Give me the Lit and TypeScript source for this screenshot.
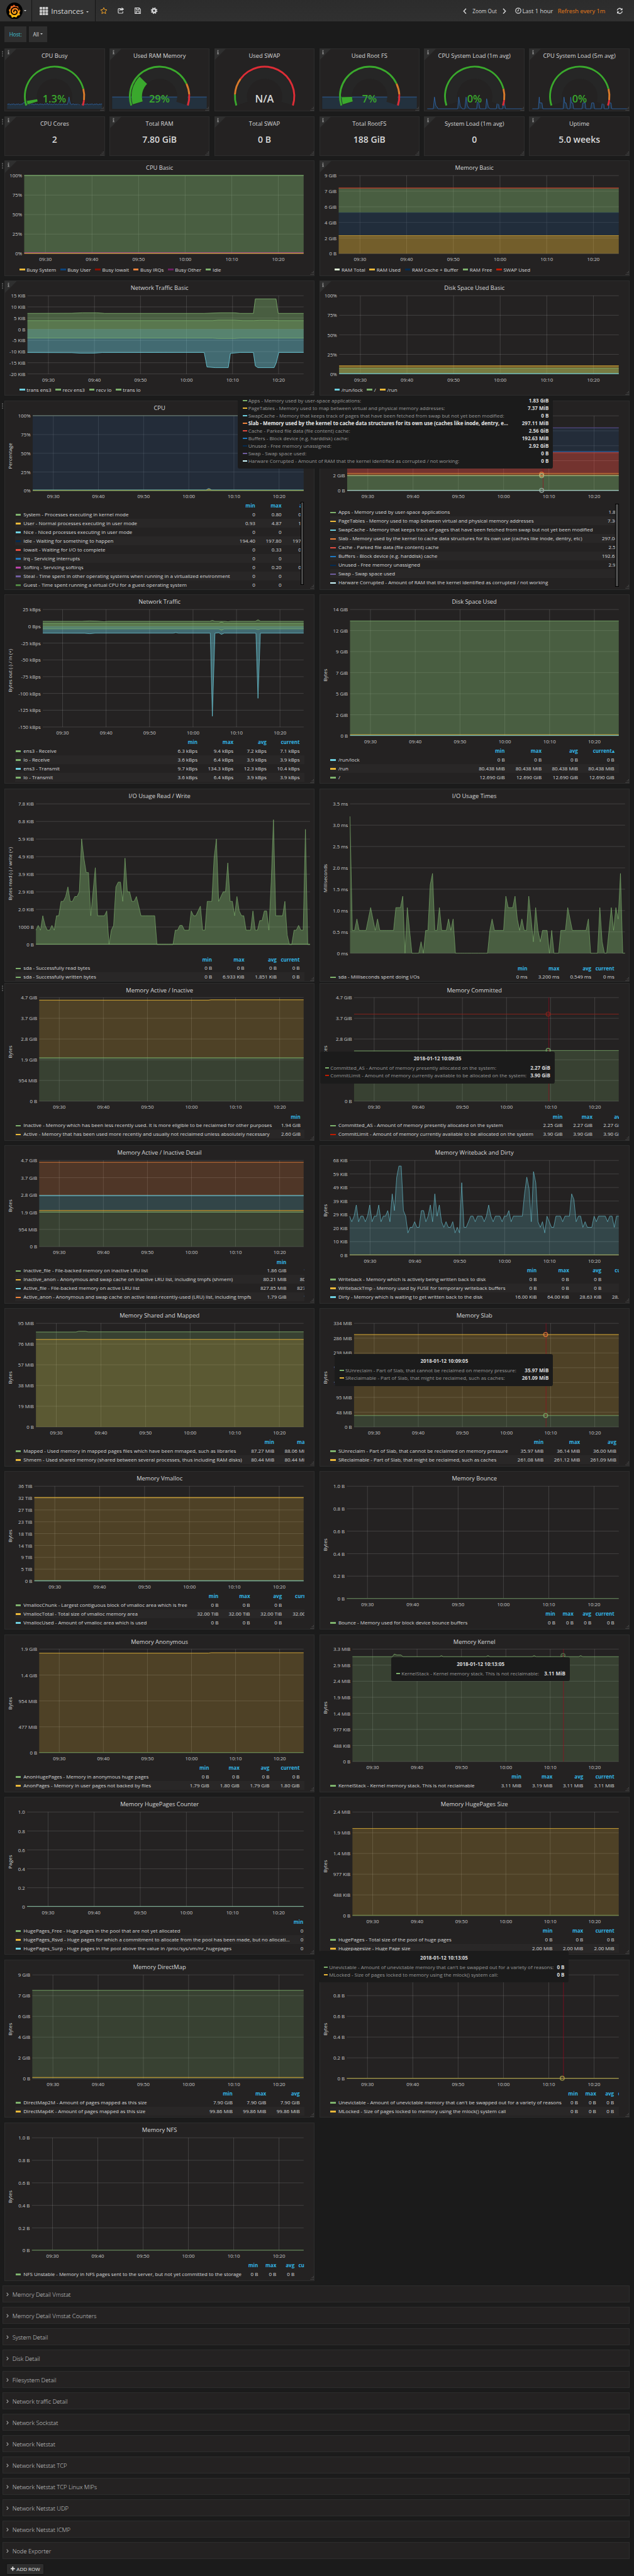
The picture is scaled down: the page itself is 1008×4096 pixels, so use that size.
import { LitElement, html, svg, css, nothing } from "lit";
import { customElement, property } from "lit/decorators.js";

type Pt = [number, number];
interface Layer { c: string; top: number | Pt[]; base?: number | Pt[]; fill?: number; w?: number; }
interface Legend { name: string; c: string; v?: string[]; }
interface Tip { x: number; y: number; w: number; h: number; title?: string; shift?: number; rows: [string, string, string, boolean?][]; }
interface Chart {
  title: string; x1: number; x2?: number; y2: number; labels: string[]; min?: number; max?: number;
  layers: Layer[]; axis?: string; axisY?: number; noTime?: boolean; info?: boolean;
  legend: Legend[]; inline?: boolean; heads?: string[]; cols?: number[]; headless?: boolean;
  scroll?: [number, number]; cursor?: number; dots?: [number, number, string][]; tip?: Tip;
}

const GREEN = "#7eb26d", YELLOW = "#eab839", CYAN = "#6ed0e0", ORANGE = "#ef843c", RED = "#e24d42",
  BLUE = "#1f78c1", NAVY = "#0a437c", DNAVY = "#052b51", PURPLE = "#705da0", MAGENTA = "#ba43a9", DRED = "#bf1b00";

/* Expands "3 4 6*2" into evenly spaced points over 0..1. */
const run = (s: string): Pt[] => {
  const v = s.trim().split(/\s+/).flatMap((t) => {
    const [a, n] = t.split("*");
    return Array(n ? +n : 1).fill(+a) as number[];
  });
  return v.map((y, i) => [i / (v.length - 1), y] as Pt);
};

const IO = run("3 4 3 6 4 3*2 4 3 6*2 9*2 10 12 9*2 10*2 11 22 18 15*2 6 11 16 6*4 7 0 3 4 12 13*2 9 18 11*2 9*2 10 8 6*7 0*8 3*2 4*2 3*3 7 6*2 7 8 3*2 9*3 18 22 9 10 11*2 17 9*2 6 10 7 6*2 3*3 7 3*2 5*2 7*2 3 13 26 6*4 9 2 0*2 3*2 4 3*2 24 0*2");
const MS = run("12 2*2 3 2*4 3 4 3 2 3 2*7 4*3 5 0 4 2 0*4 1 0 2*2 6 7 2*2 4 2*3 3 2 3 0*15 2 3 2*5 5 4*3 5 3 2 3 2*2 5 3 1 4 2 1 2*3 0 2 0*3 2*3 4 3 2*7 3 0*4 4 1 0*2 2 4 2 4 3 7 0*2");
const DIRTY = run("7 6 7 9 6 7*2 6 7 9 6 7*2 9 6 7*2 8 6 11 8 14 16*2 8 7 4 5*2 6 5*2 8*2 6 7 9 6 11 7 9 6 5 6 5*2 6 4 5 4 13 5*2 6 7*2 6 7*3 6 7 9 7 6 7*3 6 7*2 8 6 7*5 11 14 12 6 15 13 6 5 6 4 7 6 5*2 7*3 6 7*3 11 10 6 7*2 5 6 5*3 7 6 7*4 6 7*2 5 7*2");

const BYTES5 = ["4.7 GiB", "3.7 GiB", "2.8 GiB", "1.9 GiB", "954 MiB", "0 B"];
const UNIT = ["1.0 B", "0.8 B", "0.6 B", "0.4 B", "0.2 B", "0 B"];
const PCT = ["100%", "75%", "50%", "25%", "0%"];
const HEADS = ["min", "max", "avg", "current"];

const ROWS: { h: number; menu?: boolean; charts: Chart[] }[] = [
  { h: 286, menu: true, charts: [
    { title: "CPU Basic", info: true, x1: 47.2, y2: 221.3, labels: PCT, inline: true,
      layers: [
        { c: GREEN, top: 1.002, base: 0.012, fill: 0.42, w: 2 },
        { c: MAGENTA, top: 0.013, fill: 0.4, w: 1.2 },
        { c: YELLOW, top: 0.005, fill: 0.6, w: 1.5 }],
      legend: [{ name: "Busy System", c: YELLOW }, { name: "Busy User", c: NAVY }, { name: "Busy Iowait", c: "#890f02" }, { name: "Busy IRQs", c: ORANGE }, { name: "Busy Other", c: "#6d1f62" }, { name: "Idle", c: GREEN }] },
    { title: "Memory Basic", info: true, x1: 45.7, y2: 221.3, labels: ["9 GiB", "7 GiB", "6 GiB", "4 GiB", "2 GiB", "0 B"], inline: true,
      layers: [
        { c: GREEN, top: 0.839, base: 0.525, fill: 0.42, w: 0 },
        { c: "#b8402a", top: 0.84, w: 2.2 },
        { c: "#203c5c", top: 0.525, base: 0.23, fill: 0.45, w: 1 },
        { c: YELLOW, top: 0.23, fill: 0.4, w: 1.3 }],
      legend: [{ name: "RAM Total", c: "#e0f9d7" }, { name: "RAM Used", c: YELLOW }, { name: "RAM Cache + Buffer", c: DNAVY }, { name: "RAM Free", c: GREEN }, { name: "SWAP Used", c: DRED }] },
  ] },
  { h: 286, menu: true, charts: [
    { title: "Network Traffic Basic", info: true, x1: 54.9, y2: 221.7, labels: ["15 KiB", "10 KiB", "5 KiB", "0 B", "-5 KiB", "-10 KiB", "-15 KiB", "-20 KiB"], min: -20, max: 15, inline: true,
      layers: [
        { c: GREEN, top: [[0, 7.1], [0.16, 7.15], [0.2, 7.35], [0.25, 7.35], [0.28, 7.1], [0.64, 7.1], [0.7, 7.35], [0.75, 7.35], [0.77, 7.1], [0.818, 7.1], [0.825, 13.6], [0.9, 13.6], [0.908, 7.1], [1, 7.1]], base: 0, fill: 0.42, w: 1.4 },
        { c: GREEN, top: [[0, 3.85], [0.67, 3.85], [0.69, 4.1], [0.75, 4.1], [0.78, 3.85], [0.82, 3.85], [0.84, 4], [0.89, 4], [0.91, 3.85], [1, 3.85]], base: 0, fill: 0.3, w: 1.2 },
        { c: CYAN, top: [[0, -10.45], [0.16, -10.5], [0.19, -10.7], [0.24, -10.7], [0.27, -10.45], [0.64, -10.4], [0.65, -16.9], [0.68, -17.2], [0.727, -17.2], [0.735, -10.8], [0.77, -10.4], [0.818, -10.4], [0.825, -16.4], [0.834, -17.2], [0.893, -17.2], [0.901, -15], [0.91, -10.4], [1, -10.4]], base: 0, fill: 0.42, w: 1.4 },
        { c: GREEN, top: [[0, -3.95], [0.67, -3.95], [0.69, -4.15], [0.75, -4.15], [0.77, -3.95], [1, -3.95]], base: 0, fill: 0.35, w: 1.2 }],
      legend: [{ name: "trans ens3", c: CYAN }, { name: "recv ens3", c: GREEN }, { name: "recv lo", c: GREEN }, { name: "trans lo", c: GREEN }] },
    { title: "Disk Space Used Basic", info: true, x1: 46.7, y2: 221.7, labels: PCT, inline: true,
      layers: [
        { c: YELLOW, top: 0.103, fill: 0.4, w: 1.5 }, { c: GREEN, top: 0.072, fill: 0.35, w: 1.2 }, { c: CYAN, top: 0.004, w: 2 }],
      legend: [{ name: "/run/lock", c: CYAN }, { name: "/", c: GREEN }, { name: "/run", c: YELLOW }] },
  ] },
  { h: 462, menu: true, charts: [
    { title: "CPU", x1: 67.5, y2: 213.7, labels: PCT, axis: "Percentage", axisY: 130.7,
      layers: [
        { c: "#20476f", top: 1, base: 0.01, fill: 0.3, w: 0 }, { c: "#6b7f77", top: 1.002, w: 2 },
        { c: CYAN, top: [[0, 0.01], [0.64, 0.011], [0.65, 0.03], [0.66, 0.011], [1, 0.01]], w: 1.2 },
        { c: YELLOW, top: [[0, 0.006], [0.64, 0.006], [0.65, 0.022], [0.66, 0.006], [1, 0.006]], fill: 0.5, w: 0.8 },
        { c: GREEN, top: 0.003, fill: 0.5, w: 1.4 }],
      heads: ["min", "max", "avg"], cols: [597.5, 660, 723.7], scroll: [241, 198],
      legend: [
        { name: "System - Processes executing in kernel mode", c: GREEN, v: ["0", "0.80", "0.32"] },
        { name: "User - Normal processes executing in user mode", c: YELLOW, v: ["0.93", "4.87", "1.25"] },
        { name: "Nice - Niced processes executing in user mode", c: CYAN, v: ["0", "0"] },
        { name: "Idle - Waiting for something to happen", c: DNAVY, v: ["194.40", "197.80", "197.22"] },
        { name: "Iowait - Waiting for I/O to complete", c: RED, v: ["0", "0.33", "0.04"] },
        { name: "Irq - Servicing interrupts", c: BLUE, v: ["0", "0"] },
        { name: "Softirq - Servicing softirqs", c: MAGENTA, v: ["0", "0.20", "0.01"] },
        { name: "Steal - Time spent in other operating systems when running in a virtualized environment", c: PURPLE, v: ["0", "0"] },
        { name: "Guest - Time spent running a virtual CPU for a guest operating system", c: "#508642", v: ["0", "0"] }] },
    { title: "", x1: 65.9, y2: 213.5, labels: ["", "", "", "", "2 GiB", "0 B"],
      layers: [
        { c: "#20476f", top: 0.84, base: 0.53, fill: 0.3, w: 0 }, { c: "#51457c", top: 0.84, w: 2 },
        { c: "#2c568c", top: 0.53, base: 0.51, fill: 0.8, w: 0 },
        { c: RED, top: 0.507, base: 0.23, fill: 0.42, w: 1.3 },
        { c: ORANGE, top: 0.23, base: 0.2, fill: 0.42, w: 1.3 },
        { c: "#a9c58a", top: 0.2, w: 2 }, { c: GREEN, top: 0.2, fill: 0.42, w: 0 },
        { c: "#9fc8bd", top: 0.003, w: 2 }],
      cursor: 533, dots: [[529.5, 0.22, ORANGE], [529.5, 0.2, "#a9c58a"], [529.5, 0.003, "#9fb8ae"]],
      headless: true, cols: [735.3], scroll: [246, 198],
      legend: [
        { name: "Apps - Memory used by user-space applications", c: GREEN, v: ["1.83 GiB"] },
        { name: "PageTables - Memory used to map between virtual and physical memory addresses", c: YELLOW, v: ["7.36 MiB"] },
        { name: "SwapCache - Memory that keeps track of pages that have been fetched from swap but not yet been modified", c: CYAN },
        { name: "Slab - Memory used by the kernel to cache data structures for its own use (caches like inode, dentry, etc)", c: ORANGE, v: ["297.04 MiB"] },
        { name: "Cache - Parked file data (file content) cache", c: RED, v: ["2.56 GiB"] },
        { name: "Buffers - Block device (e.g. harddisk) cache", c: BLUE, v: ["192.63 MiB"] },
        { name: "Unused - Free memory unassigned", c: DNAVY, v: ["2.92 GiB"] },
        { name: "Swap - Swap space used", c: PURPLE },
        { name: "Harware Corrupted - Amount of RAM that the kernel identified as corrupted / not working", c: "#cffaff" }],
      tip: { x: -194.3, y: -5, w: 751.7, h: 167.7, shift: -4, rows: [
        [GREEN, "Apps - Memory used by user-space applications:", "1.83 GiB"],
        [YELLOW, "PageTables - Memory used to map between virtual and physical memory addresses:", "7.37 MiB"],
        [CYAN, "SwapCache - Memory that keeps track of pages that have been fetched from swap but not yet been modified:", "0 B"],
        [ORANGE, "Slab - Memory used by the kernel to cache data structures for its own use (caches like inode, dentry, e...", "297.11 MiB", true],
        [RED, "Cache - Parked file data (file content) cache:", "2.56 GiB"],
        [BLUE, "Buffers - Block device (e.g. harddisk) cache:", "192.63 MiB"],
        [DNAVY, "Unused - Free memory unassigned:", "2.92 GiB"],
        [PURPLE, "Swap - Swap space used:", "0 B"],
        ["#cffaff", "Harware Corrupted - Amount of RAM that the kernel identified as corrupted / not working:", "0 B"]] } },
  ] },
  { h: 463, charts: [
    { title: "Network Traffic", x1: 91.5, y2: 315.3, labels: ["25 kBps", "0 Bps", "-25 kBps", "-50 kBps", "-75 kBps", "-100 kBps", "-125 kBps", "-150 kBps"], min: -150, max: 25, axis: "Bytes out (-) / in (+)", axisY: 180.7,
      layers: [
        { c: GREEN, top: [[0, 7.5], [0.15, 7.5], [0.18, 8], [0.21, 7.6], [0.235, 6.8], [0.25, 7.5], [0.64, 7.5], [0.65, 8.8], [0.66, 7.5], [0.7, 7.4], [0.71, 6.8], [0.72, 7.5], [0.815, 7.5], [0.825, 9.7], [0.835, 7.5], [1, 7.5]], base: 0, fill: 0.42, w: 1.3 },
        { c: GREEN, top: [[0, 4.2], [0.675, 4.2], [0.685, 6.5], [0.695, 4.2], [1, 4.2]], base: 0, fill: 0.3, w: 1.2 },
        { c: CYAN, top: [[0, -10.2], [0.16, -10.3], [0.18, -11], [0.2, -10.2], [0.5, -10.2], [0.51, -9.4], [0.52, -10.2], [0.642, -10.2], [0.65, -134], [0.66, -10.2], [0.675, -9.6], [0.685, -12], [0.695, -10.2], [0.817, -10.2], [0.825, -107.3], [0.834, -10.2], [1, -10.2]], base: 0, fill: 0.42, w: 1.2 },
        { c: GREEN, top: [[0, -3.8], [0.675, -3.8], [0.685, -6], [0.695, -3.8], [0.815, -3.8], [0.825, -4.8], [0.835, -3.8], [1, -3.8]], base: 0, fill: 0.35, w: 1.2 }],
      heads: HEADS, cols: [459.7, 545.4, 624.5, 703.5],
      legend: [
        { name: "ens3 - Receive", c: GREEN, v: ["6.3 kBps", "9.4 kBps", "7.2 kBps", "7.1 kBps"] },
        { name: "lo - Receive", c: GREEN, v: ["3.6 kBps", "6.4 kBps", "3.9 kBps", "3.9 kBps"] },
        { name: "ens3 - Transmit", c: CYAN, v: ["9.7 kBps", "134.3 kBps", "12.3 kBps", "10.4 kBps"] },
        { name: "lo - Transmit", c: GREEN, v: ["3.6 kBps", "6.4 kBps", "3.9 kBps", "3.9 kBps"] }] },
    { title: "Disk Space Used", x1: 72.7, y2: 336.3, labels: ["14 GiB", "12 GiB", "9 GiB", "7 GiB", "5 GiB", "2 GiB", "0 B"], axis: "Bytes", axisY: 191.7,
      layers: [{ c: GREEN, top: 0.91, fill: 0.42, w: 1.3 }, { c: YELLOW, top: 0.008, w: 1.5 }, { c: CYAN, top: 0.003, w: 1.4 }],
      heads: ["min", "max", "avg", "current▴"], cols: [441.8, 529.5, 616.2, 703],
      legend: [
        { name: "/run/lock", c: CYAN, v: ["0 B", "0 B", "0 B", "0 B"] },
        { name: "/run", c: YELLOW, v: ["80.438 MiB", "80.438 MiB", "80.438 MiB", "80.438 MiB"] },
        { name: "/", c: GREEN, v: ["12.690 GiB", "12.690 GiB", "12.690 GiB", "12.690 GiB"] }] },
  ] },
  { h: 463, charts: [
    { title: "I/O Usage Read / Write", x1: 75.2, x2: 728.5, y2: 370.7, labels: ["7.8 KiB", "6.8 KiB", "5.9 KiB", "4.9 KiB", "3.9 KiB", "2.9 KiB", "2.0 KiB", "1000 B", "0 B"], max: 29.3, noTime: true, axis: "Bytes read (-) / write (+)", axisY: 201.7,
      layers: [{ c: GREEN, top: IO, fill: 0.42, w: 1.1 }, { c: GREEN, top: 0.1, w: 1.6 }],
      heads: HEADS, cols: [494.4, 571.5, 648.5, 703.5],
      legend: [
        { name: "sda - Successfully read bytes", c: GREEN, v: ["0 B", "0 B", "0 B", "0 B"] },
        { name: "sda - Successfully written bytes", c: GREEN, v: ["0 B", "6.933 KiB", "1.851 KiB", "0 B"] }] },
    { title: "I/O Usage Times", x1: 72.7, x2: 728.3, y2: 391.3, labels: ["3.5 ms", "3.0 ms", "2.5 ms", "2.0 ms", "1.5 ms", "1.0 ms", "0.5 ms", "0 ms"], max: 13.1, noTime: true, axis: "Milliseconds", axisY: 212.7,
      layers: [{ c: GREEN, top: MS, fill: 0.42, w: 1.1 }],
      heads: HEADS, cols: [495.7, 571.9, 648, 703],
      legend: [{ name: "sda - Milliseconds spent doing I/Os", c: GREEN, v: ["0 ms", "3.200 ms", "0.549 ms", "0 ms"] }] },
  ] },
  { h: 388, menu: true, charts: [
    { title: "Memory Active / Inactive", x1: 82.9, y2: 282.3, labels: BYTES5, axis: "Bytes", axisY: 164.7,
      layers: [{ c: YELLOW, top: [[0, 0.976], [0.64, 0.976], [0.65, 0.979], [1, 0.979]], base: 0.418, fill: 0.21, w: 1.5 }, { c: GREEN, top: 0.418, fill: 0.22, w: 1.8 }],
      heads: ["min"], cols: [705.4],
      legend: [
        { name: "Inactive - Memory which has been less recently used. It is more eligible to be reclaimed for other purposes", c: GREEN, v: ["1.94 GiB"] },
        { name: "Active - Memory that has been used more recently and usually not reclaimed unless absolutely necessary", c: YELLOW, v: ["2.60 GiB"] }] },
    { title: "Memory Committed", x1: 82.3, y2: 282.3, labels: ["4.7 GiB", "3.7 GiB", "2.8 GiB", "", "", "0 B"], axis: "Bytes", axisY: 164.7,
      layers: [{ c: "#8e231b", top: 0.841, w: 1.6 }, { c: GREEN, top: [[0, 0.486], [0.32, 0.486], [0.335, 0.489], [1, 0.489]], fill: 0.22, w: 1.3 }],
      cursor: 546.8, dots: [[545, 0.841, "#8e231b"], [545, 0.49, GREEN]],
      heads: ["min", "max", "avg"], cols: [579.5, 650.9, 723],
      legend: [
        { name: "Committed_AS - Amount of memory presently allocated on the system", c: GREEN, v: ["2.25 GiB", "2.27 GiB", "2.27 GiB"] },
        { name: "CommitLimit - Amount of memory currently available to be allocated on the system", c: DRED, v: ["3.90 GiB", "3.90 GiB", "3.90 GiB"] }],
      tip: { x: 1.4, y: 164, w: 559.8, h: 76, title: "2018-01-12 10:09:35", rows: [
        [GREEN, "Committed_AS - Amount of memory presently allocated on the system:", "2.27 GiB"],
        [DRED, "CommitLimit - Amount of memory currently available to be allocated on the system:", "3.90 GiB"]] } },
  ] },
  { h: 388, charts: [
    { title: "Memory Active / Inactive Detail", x1: 82.9, y2: 240.7, labels: BYTES5, axis: "Bytes", axisY: 143.3,
      layers: [
        { c: ORANGE, top: 0.979, base: 0.594, fill: 0.21, w: 1.6 }, { c: CYAN, top: 0.592, base: 0.42, fill: 0.2, w: 1.8 },
        { c: YELLOW, top: 0.42, base: 0.402, fill: 0.2, w: 1.4 }, { c: GREEN, top: 0.402, fill: 0.22, w: 1.8 }],
      heads: ["min", ""], cols: [671.7, 759],
      legend: [
        { name: "Inactive_file - File-backed memory on inactive LRU list", c: GREEN, v: ["1.86 GiB", "1.86 GiB"] },
        { name: "Inactive_anon - Anonymous and swap cache on inactive LRU list, including tmpfs (shmem)", c: YELLOW, v: ["80.21 MiB", "80.21 MiB"] },
        { name: "Active_file - File-backed memory on active LRU list", c: CYAN, v: ["827.85 MiB", "827.86 MiB"] },
        { name: "Active_anon - Anonymous and swap cache on active least-recently-used (LRU) list, including tmpfs", c: ORANGE, v: ["1.79 GiB", "1.80 GiB"] }] },
    { title: "Memory Writeback and Dirty", x1: 71.7, y2: 261, labels: ["68 KiB", "59 KiB", "49 KiB", "39 KiB", "29 KiB", "20 KiB", "10 KiB", "0 B"], max: 17, axis: "Bytes", axisY: 154.7,
      layers: [{ c: CYAN, top: DIRTY, fill: 0.21, w: 1 }, { c: "#a8b060", top: 0.05, w: 1.8 }],
      heads: HEADS, cols: [517.9, 595, 672, 749],
      legend: [
        { name: "Writeback - Memory which is actively being written back to disk", c: GREEN, v: ["0 B", "0 B", "0 B"] },
        { name: "WritebackTmp - Memory used by FUSE for temporary writeback buffers", c: YELLOW, v: ["0 B", "0 B", "0 B"] },
        { name: "Dirty - Memory which is waiting to get written back to the disk", c: CYAN, v: ["16.00 KiB", "64.00 KiB", "28.63 KiB", "28.00 KiB"] }] },
  ] },
  { h: 388.5, charts: [
    { title: "Memory Shared and Mapped", x1: 75.2, y2: 282.3, labels: ["95 MiB", "76 MiB", "57 MiB", "38 MiB", "19 MiB", "0 B"], axis: "Bytes", axisY: 164.7,
      layers: [
        { c: GREEN, top: [[0, 0.916], [0.15, 0.916], [0.16, 0.923], [0.185, 0.923], [0.195, 0.918], [1, 0.918]], fill: 0.22, w: 1.4 },
        { c: YELLOW, top: 0.845, fill: 0.2, w: 1.4 }],
      heads: ["min", "max"], cols: [642.8, 722.6],
      legend: [
        { name: "Mapped - Used memory in mapped pages files which have been mmaped, such as libraries", c: GREEN, v: ["87.27 MiB", "88.06 MiB"] },
        { name: "Shmem - Used shared memory (shared between several processes, thus including RAM disks)", c: YELLOW, v: ["80.44 MiB", "80.44 MiB"] }] },
    { title: "Memory Slab", x1: 82.3, y2: 282.3, labels: ["334 MiB", "286 MiB", "238 MiB", "191 MiB", "143 MiB", "95 MiB", "48 MiB", "0 B"], axis: "Bytes", axisY: 164.7,
      layers: [{ c: YELLOW, top: 0.892, base: 0.11, fill: 0.21, w: 1.5 }, { c: GREEN, top: 0.11, fill: 0.22, w: 1.4 }],
      cursor: 540, dots: [[539, 0.892, ORANGE], [539, 0.11, GREEN]],
      heads: ["min", "max", "avg"], cols: [534.3, 621, 707.7],
      legend: [
        { name: "SUnreclaim - Part of Slab, that cannot be reclaimed on memory pressure", c: GREEN, v: ["35.97 MiB", "36.14 MiB", "36.00 MiB"] },
        { name: "SReclaimable - Part of Slab, that might be reclaimed, such as caches", c: YELLOW, v: ["261.08 MiB", "261.12 MiB", "261.09 MiB"] }],
      tip: { x: 37.1, y: 109, w: 520.3, h: 76, title: "2018-01-12 10:09:05", rows: [
        [GREEN, "SUnreclaim - Part of Slab, that cannot be reclaimed on memory pressure:", "35.97 MiB"],
        [YELLOW, "SReclaimable - Part of Slab, that might be reclaimed, such as caches:", "261.09 MiB"]] } },
  ] },
  { h: 388.5, charts: [
    { title: "Memory Vmalloc", x1: 71.3, y2: 261.3, labels: ["36 TiB", "32 TiB", "27 TiB", "23 TiB", "18 TiB", "14 TiB", "9 TiB", "5 TiB", "0 B"], axis: "Bytes", axisY: 153.7,
      layers: [{ c: YELLOW, top: 0.881, fill: 0.21, w: 1.6 }, { c: "#78b8a0", top: 0.003, w: 2 }],
      heads: HEADS, cols: [509.8, 585, 661, 737.5],
      legend: [
        { name: "VmallocChunk - Largest contiguous block of vmalloc area which is free", c: GREEN, v: ["0 B", "0 B", "0 B"] },
        { name: "VmallocTotal - Total size of vmalloc memory area", c: YELLOW, v: ["32.00 TiB", "32.00 TiB", "32.00 TiB", "32.00 TiB"] },
        { name: "VmallocUsed - Amount of vmalloc area which is used", c: CYAN, v: ["0 B", "0 B", "0 B"] }] },
    { title: "Memory Bounce", x1: 65, y2: 303.3, labels: UNIT, axis: "Bytes", axisY: 174.7,
      layers: [{ c: "#5f8154", top: 0.002, w: 2 }],
      heads: HEADS, cols: [562.2, 605.6, 648, 703],
      legend: [{ name: "Bounce - Memory used for block device bounce buffers", c: GREEN, v: ["0 B", "0 B", "0 B", "0 B"] }] },
  ] },
  { h: 388, charts: [
    { title: "Memory Anonymous", x1: 82.9, y2: 282.3, labels: ["1.9 GiB", "1.4 GiB", "954 MiB", "477 MiB", "0 B"], axis: "Bytes", axisY: 164.7,
      layers: [{ c: YELLOW, top: [[0, 0.961], [0.64, 0.961], [0.65, 0.965], [1, 0.965]], fill: 0.21, w: 1.4 }, { c: "#6d8f50", top: 0.002, w: 1.8 }],
      heads: HEADS, cols: [487.6, 559.9, 631.2, 703.5],
      legend: [
        { name: "AnonHugePages - Memory in anonymous huge pages", c: GREEN, v: ["0 B", "0 B", "0 B", "0 B"] },
        { name: "AnonPages - Memory in user pages not backed by files", c: YELLOW, v: ["1.79 GiB", "1.80 GiB", "1.79 GiB", "1.80 GiB"] }] },
    { title: "Memory Kernel", x1: 78.5, y2: 303.3, labels: ["3.3 MiB", "2.9 MiB", "2.4 MiB", "1.9 MiB", "1.4 MiB", "977 KiB", "488 KiB", "0 B"], axis: "Bytes", axisY: 175,
      layers: [{ c: GREEN, top: [[0, 0.933], [0.15, 0.933], [0.157, 0.956], [0.167, 0.948], [0.182, 0.948], [0.19, 0.933], [0.327, 0.933], [0.334, 0.942], [0.341, 0.933], [0.502, 0.933], [0.509, 0.942], [0.516, 0.933], [0.675, 0.933], [0.682, 0.942], [0.69, 0.933], [0.784, 0.933], [0.791, 0.942], [0.8, 0.933], [0.85, 0.933], [0.857, 0.942], [0.865, 0.933], [1, 0.933]], fill: 0.22, w: 1.3 }],
      cursor: 581.5, dots: [[580.5, 0.942, "#5b7f50"]],
      heads: HEADS, cols: [481.3, 555.5, 628.7, 703],
      legend: [{ name: "KernelStack - Kernel memory stack. This is not reclaimable", c: GREEN, v: ["3.11 MiB", "3.19 MiB", "3.11 MiB", "3.11 MiB"] }],
      tip: { x: 171, y: 54.2, w: 426, h: 57.8, title: "2018-01-12 10:13:05", rows: [
        [GREEN, "KernelStack - Kernel memory stack. This is not reclaimable:", "3.11 MiB"]] } },
  ] },
  { h: 388, charts: [
    { title: "Memory HugePages Counter", x1: 54, y2: 261, labels: ["1.0", "0.8", "0.6", "0.4", "0.2", "0"], axis: "Pages", axisY: 154,
      layers: [{ c: "#84b79b", top: 0.002, w: 2 }],
      heads: ["min"], cols: [712.1],
      legend: [
        { name: "HugePages_Free - Huge pages in the pool that are not yet allocated", c: GREEN, v: ["0"] },
        { name: "HugePages_Rsvd - Huge pages for which a commitment to allocate from the pool has been made, but no allocati...", c: YELLOW, v: ["0"] },
        { name: "HugePages_Surp - Huge pages in the pool above the value in /proc/sys/vm/nr_hugepages", c: CYAN, v: ["0"] }] },
    { title: "Memory HugePages Size", x1: 78.5, y2: 282.4, labels: ["2.4 MiB", "1.9 MiB", "1.4 MiB", "977 KiB", "488 KiB", "0 B"], axis: "Bytes", axisY: 164.7,
      layers: [{ c: YELLOW, top: 0.841, fill: 0.21, w: 1.4 }, { c: "#748a4c", top: 0.003, w: 2 }],
      heads: ["min", "max", "current"], cols: [555.5, 628.7, 703],
      legend: [
        { name: "HugePages - Total size of the pool of huge pages", c: GREEN, v: ["0 B", "0 B", "0 B"] },
        { name: "Hugepagesize - Huge Page size", c: YELLOW, v: ["2.00 MiB", "2.00 MiB", "2.00 MiB"] }] },
  ] },
  { h: 388, charts: [
    { title: "Memory DirectMap", x1: 66.5, y2: 282.6, labels: ["9 GiB", "7 GiB", "6 GiB", "4 GiB", "2 GiB", "0 B"], axis: "Bytes", axisY: 164.7,
      layers: [{ c: GREEN, top: 0.851, fill: 0.22, w: 1.4 }, { c: YELLOW, top: 0.012, w: 1.5 }],
      heads: ["min", "max", "avg"], cols: [543.5, 623.5, 703.5],
      legend: [
        { name: "DirectMap2M - Amount of pages mapped as this size", c: GREEN, v: ["7.90 GiB", "7.90 GiB", "7.90 GiB"] },
        { name: "DirectMap4K - Amount of pages mapped as this size", c: YELLOW, v: ["99.86 MiB", "99.86 MiB", "99.86 MiB"] }] },
    { title: "", x1: 65, y2: 282.4, labels: ["", "0.8 B", "0.6 B", "0.4 B", "0.2 B", "0 B"], axis: "Bytes", axisY: 164.7,
      layers: [{ c: "#b0a548", top: 0.002, w: 2 }],
      cursor: 581.5, dots: [[578.6, 0.003, "#b0a548"]],
      heads: HEADS, cols: [616.2, 659.5, 702, 757],
      legend: [
        { name: "Unevictable - Amount of unevictable memory that can't be swapped out for a variety of reasons", c: GREEN, v: ["0 B", "0 B", "0 B"] },
        { name: "MLocked - Size of pages locked to memory using the mlock() system call", c: YELLOW, v: ["0 B", "0 B", "0 B"] }],
      tip: { x: -1.5, y: -21, w: 596.5, h: 75.5, title: "2018-01-12 10:13:05", rows: [
        [GREEN, "Unevictable - Amount of unevictable memory that can't be swapped out for a variety of reasons:", "0 B"],
        [YELLOW, "MLocked - Size of pages locked to memory using the mlock() system call:", "0 B"]] } },
  ] },
  { h: 389, charts: [
    { title: "Memory NFS", x1: 65.5, y2: 303.8, labels: UNIT, axis: "Bytes", axisY: 175.9,
      layers: [{ c: "#628753", top: 0.002, w: 2 }],
      heads: HEADS, cols: [604.2, 647.6, 691, 745.5],
      legend: [{ name: "NFS Unstable - Memory in NFS pages sent to the server, but not yet committed to the storage", c: GREEN, v: ["0 B", "0 B", "0 B"] }] },
  ] },
];

const GAUGES: { title: string; text: string; value: number; a: number; b: number; gray?: boolean; spark?: Pt[] }[] = [
  { title: "CPU Busy", text: "1.3%", value: 0.04, a: 0.85, b: 0.95,
    spark: Array.from({ length: 110 }, (_, i) => {
      const x = 7 + i * 2.07;
      const n = Math.sin(i * 2.3) * 0.9 + Math.sin(i * 5.1) * 0.6;
      const y = i === 71 ? 116.3 : i === 70 || i === 72 ? 128 : i === 19 || i === 20 ? 129.5 : i === 18 || i === 46 ? 131 : 133.6 + n;
      return [x, y] as Pt;
    }) },
  { title: "Used RAM Memory", text: "29%", value: 0.29, a: 0.8, b: 0.9, spark: [[6.5, 116.3], [232, 116.3]] },
  { title: "Used SWAP", text: "N/A", value: 0, a: 0.1, b: 0.25, gray: true },
  { title: "Used Root FS", text: "7%", value: 0.075, a: 0.8, b: 0.9, spark: [[6.5, 116.3], [232, 116.3]] },
  { title: "CPU System Load (1m avg)", text: "0%", value: 0, a: 0.85, b: 0.95,
    spark: [[6.5, 144.4], [21, 144.4], [23.6, 116.5], [27, 137], [30, 140], [32, 144.4], [79, 144.4], [81.5, 116.5], [85, 138], [90, 144.4], [96, 144.4], [99, 116.5], [102, 137], [107, 144.4], [124, 144.4], [126, 128], [129.5, 131], [132, 144.4], [146, 144.4], [148, 120.3], [152, 140], [156, 144.4], [171, 144.4], [173, 131], [176.5, 132], [178, 144.4], [186, 144.4], [188.5, 123], [193, 144.4], [232, 144.4]] },
  { title: "CPU System Load (5m avg)", text: "0%", value: 0, a: 0.85, b: 0.95,
    spark: [[6.5, 144.4], [21, 144.4], [23, 116.5], [24, 130.5], [29.5, 130.5], [31.5, 144.4], [80, 144.4], [82, 116.5], [84, 130.5], [87, 130.5], [90, 144.4], [96, 144.4], [98, 116.5], [100, 130.5], [103, 130.5], [105, 144.4], [125, 144.4], [127, 130.5], [132.5, 130.5], [134, 144.4], [146, 144.4], [148, 130.5], [153, 130.5], [155, 144.4], [171, 144.4], [173, 131.5], [177, 133], [178, 144.4], [188, 144.4], [189, 118], [190, 130.5], [194, 130.5], [196, 144.4], [232, 144.4]] },
];

const STATS: [string, string][] = [["CPU Cores", "2"], ["Total RAM", "7.80 GiB"], ["Total SWAP", "0 B"], ["Total RootFS", "188 GiB"], ["System Load (1m avg)", "0"], ["Uptime", "5.0 weeks"]];

const COLLAPSED = ["Memory Detail Vmstat", "Memory Detail Vmstat Counters", "System Detail", "Disk Detail", "Filesystem Detail", "Network traffic Detail", "Network Sockstat", "Network Netstat", "Network Netstat TCP", "Network Netstat TCP Linux MIPs", "Network Netstat UDP", "Network Netstat ICMP", "Node Exporter"];

const panelStyles = css`
  :host { display: block; position: relative; min-width: 0; }
  .panel { height: 100%; box-sizing: border-box; background: #242222; border: 1px solid #2d2d2d; display: flex; flex-direction: column; }
  .title { height: 25px; flex: none; line-height: 32px; text-align: center; font-size: 14px; font-weight: 500; color: #d8d9da; white-space: nowrap; }
  .plot { display: block; flex: none; overflow: visible; margin-left: -1px; }
  .corner { position: absolute; left: 1px; top: 1px; width: 28px; height: 28px; }
  .grip { position: absolute; right: 1px; bottom: 1px; width: 10px; height: 10px; }
`;

const corner = html`<svg class="corner" viewBox="0 0 28 28"><path d="M0 0H28L0 28Z" fill="#2f2f2f"/><path d="M6.7 4h3v2.2h-3zM6.2 7.5h3.3v5h.9v1.3H6.2v-1.3h.9V8.8h-.9z" fill="#8a8a8a"/></svg>`;
const grip = html`<svg class="grip" viewBox="0 0 10 10"><path d="M7 0h2v2H7zM4 3h2v2H4zM7 3h2v2H7zM1 7h2v2H1zM4 7h2v2H4zM7 7h2v2H7z" fill="#4d4d4d"/></svg>`;

@customElement("graph-panel")
export class GraphPanel extends LitElement {
  @property({ attribute: false }) chart!: Chart;

  static styles = [panelStyles, css`
    text { font-size: 11.7px; fill: #c8c8c8; }
    .axis { font-size: 11.8px; fill: #d8d9da; }
    .legend { margin-left: 24px; width: 689px; overflow: hidden; flex: none; font-size: 12px; color: #d8d9da; white-space: nowrap; }
    .clip { width: 681px; }
    .head { height: 19px; padding-top: 3.5px; line-height: 19px; color: #33b5e5; font-weight: 700; display: flex; }
    .bare { height: 17.5px; }
    .row { height: 21px; line-height: 21px; display: flex; align-items: center; }
    .row:nth-child(odd) { background: #292727; }
    .swatch { width: 13px; height: 4px; margin: 2px 6px 0 1px; flex: none; }
    .name { flex: none; display: flex; align-items: center; }
    .cell { flex: none; text-align: right; display: flex; justify-content: flex-end; }
    .inline { display: flex; gap: 10px; padding-left: 34.5px; height: 26px; align-items: center; font-size: 12px; color: #d8d9da; white-space: nowrap; }
    .item { display: flex; align-items: center; }
    .item .swatch { margin: 2px 4px 0 0; }
    .bar { position: absolute; left: 706px; width: 8px; box-sizing: border-box; background: #484848; border: solid #000; border-width: 2px 1.5px; }
    .tip { position: absolute; z-index: 5; box-sizing: border-box; background: #1b1b1b; border-radius: 5px; overflow: hidden; padding: 0 10.5px 0 12px; font-size: 12px; color: #999; white-space: nowrap; }
    .when { text-align: center; font-weight: 700; color: #d8d9da; line-height: 18px; padding: 8px 0 4px; }
    .line { display: flex; align-items: center; height: 18px; line-height: 18px; }
    .line .swatch { width: 10px; height: 3px; margin: 0 3px 0 0; }
    .val { margin-left: auto; font-weight: 700; color: #d8d9da; }
    .strong { font-weight: 700; color: #e8e8e8; }
  `];

  private plot(c: Chart) {
    const x2 = c.x2 ?? 713.3, y1 = 35.3, y2 = c.y2, w = x2 - c.x1, h = y2 - y1;
    const min = c.min ?? 0, max = c.max ?? 1;
    const X = (t: number) => (c.x1 + t * w).toFixed(1);
    const Y = (v: number) => (y2 - ((v - min) / (max - min)) * h).toFixed(1);
    const pts = (p: number | Pt[]): Pt[] => (typeof p === "number" ? [[0, p], [1, p]] : p);
    const line = (p: Pt[]) => p.map(([t, v]) => `${X(t)} ${Y(v)}`).join("L");
    const n = c.labels.length - 1;
    const times = c.noTime ? [] : ["09:30", "09:40", "09:50", "10:00", "10:10", "10:20"];
    const H = y2 + 24 - 26;
    return html`<svg class="plot" width="740" height=${H} viewBox="0 26 740 ${H}">
      ${c.labels.map((l, i) => {
        const y = y1 + (h * i) / n;
        return svg`<line x1=${c.x1} x2=${x2} y1=${y} y2=${y} stroke="#c8c8c8" stroke-opacity=".23" stroke-width="1.2"/>
          ${l ? svg`<text x=${c.x1 - 5} y=${y + 4.8} text-anchor="end">${l}</text>` : nothing}`;
      })}
      ${times.map((l, i) => {
        const x = c.x1 + w * (0.076 + i / 6);
        return svg`<line x1=${x} x2=${x} y1=${y1} y2=${y2} stroke="#c8c8c8" stroke-opacity=".23" stroke-width="1.2"/>
          <text x=${x} y=${y2 + 18} text-anchor="middle">${l}</text>`;
      })}
      ${c.layers.map((l) => {
        const top = pts(l.top), base = [...pts(l.base ?? min)].reverse();
        return svg`${l.fill ? svg`<path d="M${line(top)}L${line(base)}Z" fill=${l.c} fill-opacity=${l.fill}/>` : nothing}
          ${l.w === 0 ? nothing : svg`<path d="M${line(top)}" fill="none" stroke=${l.c} stroke-width=${l.w ?? 1.3} stroke-opacity=".9"/>`}`;
      })}
      ${c.cursor ? svg`<line x1=${c.cursor} x2=${c.cursor} y1=${y1} y2=${y2} stroke="#aa001e" stroke-opacity=".75" stroke-width="1.2"/>` : nothing}
      ${(c.dots ?? []).map(([x, v, col]) => svg`<circle cx=${x} cy=${Y(v)} r="4.8" fill="none" stroke=${col} stroke-width="2.4" stroke-opacity=".75"/>`)}
      ${c.axis ? svg`<text class="axis" text-anchor="middle" transform="translate(17.5 ${c.axisY ?? 150}) rotate(-90)">${c.axis}</text>` : nothing}
    </svg>`;
  }

  private legend(c: Chart) {
    if (c.inline) {
      return html`<div class="inline">${c.legend.map((l) => html`<span class="item"><i class="swatch" style="background:${l.c}"></i>${l.name}</span>`)}</div>`;
    }
    const cols = c.cols ?? [];
    const widths = cols.map((r, i) => (i ? r - cols[i - 1] : 60));
    const nameW = cols[0] - 60 - 25;
    const cells = (v: string[]) => widths.map((w, i) => html`<span class="cell" style="width:${w}px">${v[i] ?? ""}</span>`);
    return html`<div class="legend ${c.scroll ? "clip" : ""}">
      ${c.headless ? html`<div class="bare"></div>` : html`<div class="head"><span class="name" style="width:${nameW}px"></span>${cells(c.heads ?? [])}</div>`}
      ${c.legend.map((l) => html`<div class="row"><span class="name" style="width:${nameW}px"><i class="swatch" style="background:${l.c}"></i>${l.name}</span>${cells(l.v ?? [])}</div>`)}
    </div>`;
  }

  private tip(t: Tip) {
    return html`<div class="tip" style="left:${t.x}px;top:${t.y}px;width:${t.w}px;height:${t.h}px">
      ${t.title ? html`<div class="when">${t.title}</div>` : nothing}
      <div class="lines" style="margin-top:${t.shift ?? 0}px">
      ${t.rows.map(([c, n, v, s]) => html`<div class="line"><i class="swatch" style="background:${c}"></i><span class=${s ? "strong" : ""}>${n}</span><span class="val">${v}</span></div>`)}
      </div></div>`;
  }

  render() {
    const c = this.chart;
    return html`<div class="panel"><div class="title">${c.title}</div>${this.plot(c)}${this.legend(c)}</div>
      ${c.info ? corner : nothing}${grip}
      ${c.scroll ? html`<div class="bar" style="top:${c.scroll[0]}px;height:${c.scroll[1]}px"></div>` : nothing}
      ${c.tip ? this.tip(c.tip) : nothing}`;
  }
}

@customElement("gauge-panel")
export class GaugePanel extends LitElement {
  @property({ attribute: false }) gauge!: (typeof GAUGES)[number];

  static styles = [panelStyles, css`
    .value { font-size: 24.5px; font-weight: 600; fill: #3aa82d; }
    .gray { fill: #d8d9da; }
  `];

  private arc(from: number, to: number, ri: number, ro: number, fill: string) {
    const p = (f: number, r: number) => {
      const a = ((198 - 216 * f) * Math.PI) / 180;
      return `${(119.5 + r * Math.cos(a)).toFixed(2)} ${(114.7 - r * Math.sin(a)).toFixed(2)}`;
    };
    const big = (to - from) * 216 > 180 ? 1 : 0;
    return svg`<path fill=${fill} d="M${p(from, ro)}A${ro} ${ro} 0 ${big} 1 ${p(to, ro)}L${p(to, ri)}A${ri} ${ri} 0 ${big} 0 ${p(from, ri)}Z"/>`;
  }

  render() {
    const g = this.gauge;
    const s = g.spark?.map((p) => p.join(" ")).join("L");
    return html`<div class="panel"><div class="title">${g.title}</div>
      <svg class="plot" width="239" height="123" viewBox="0 26 239 123">
        ${s ? svg`<path d="M${s}V145H6.5Z" fill="#1f78c1" fill-opacity=".18"/><path d="M${s}" fill="none" stroke="#3272c0" stroke-width="1.1"/>` : nothing}
        ${this.arc(0, 1, 42, 67, "#262626")}
        ${g.value ? this.arc(0.006, g.value, 42, 67, "#3aa82d") : nothing}
        ${this.arc(0, g.a, 68.6, 73, "#3aa82d")}
        ${this.arc(g.a, g.b, 68.6, 73, "#d87a2b")}
        ${this.arc(g.b, 1, 68.6, 73, "#dc2d36")}
        <text class="value ${g.gray ? "gray" : ""}" x="119" y="129" text-anchor="middle">${g.text}</text>
      </svg></div>${corner}${grip}`;
  }
}

@customElement("stat-panel")
export class StatPanel extends LitElement {
  @property() label = "";
  @property() value = "";

  static styles = [panelStyles, css`
    .big { flex: 1; display: flex; align-items: center; justify-content: center; padding-bottom: 8px; font-size: 21px; font-weight: 600; color: #d8d9da; }
  `];

  render() {
    return html`<div class="panel"><div class="title">${this.label}</div><div class="big">${this.value}</div></div>${corner}${grip}`;
  }
}

@customElement("app-root")
export class AppRoot extends LitElement {
  static styles = css`
    :host { display: block; background: #1b1b1b; min-height: 4096px; overflow: hidden; }
    .page { zoom: 0.667; width: 1511px; font-family: "Open Sans", "Noto Sans", sans-serif; color: #d8d9da; }
    .nav { height: 51px; display: flex; background: linear-gradient(#2c2c2c, #303030); align-items: stretch; }
    .brand { width: 77px; display: flex; align-items: center; border-right: 1px solid #161616; box-sizing: border-box; background: #333; padding-left: 15px; gap: 3px; }
    .dash { width: 151px; display: flex; align-items: center; border-right: 1px solid #161616; box-sizing: border-box; padding: 2px 0 0 18px; font-size: 17.5px; background: #303030; }
    .dash svg { margin-right: 7px; }
    .caret { border: 3px solid transparent; border-top-color: #d8d9da; border-bottom: 0; margin-left: 7px; margin-top: 5px; }
    .brand .caret { margin: 0; border-width: 4px 3.5px 0; }
    .tools { display: flex; align-items: center; gap: 22px; padding-left: 11px; }
    .tools svg { width: 18px; height: 18px; }
    .right { margin-left: auto; display: flex; align-items: center; padding-right: 26px; font-size: 14px; padding-top: 2px; }
    .zoomout { font-size: 12.3px; margin: -2px 14px 0; }
    .refresh { color: #eb7b18; margin: 0 26px 0 11px; }
    .clock { margin-right: 3px; margin-top: -2px; }
    .vars { display: flex; gap: 5px; padding: 12px 0 15px 10.5px; height: 37px; font-size: 12.3px; }
    .key, .pick { background: #2f2f2f; display: flex; align-items: center; justify-content: center; }
    .key { width: 53px; color: #41c3d8; }
    .pick { width: 44.5px; }
    .pick .caret { margin: 0 0 0 4px; }
    .grid { position: relative; display: grid; column-gap: 11px; padding: 0 10.5px 11.4px; box-sizing: border-box; }
    .six { grid-template-columns: repeat(6, minmax(0, 1fr)); }
    .two { grid-template-columns: repeat(2, minmax(0, 1fr)); }
    .menu { position: absolute; left: 4px; top: 6px; }
    .bars { display: flex; flex-direction: column; gap: 11.5px; padding: 0 10.5px 0 6px; }
    .fold { height: 39.5px; box-sizing: border-box; background: #242222; border: 1px solid #2d2d2d; display: flex; align-items: center; padding: 2px 0 0 8px; gap: 8px; font-size: 14px; color: #d0d1d2; font-weight: 300; }
    .add { margin: 12px 0 5px 17px; width: 87px; height: 24px; display: flex; align-items: center; justify-content: center; gap: 4px; background: #2e2e2e; border-radius: 2px; font-size: 12px; color: #e3e3e3; box-shadow: 0 1px 2px #0008; }
  `;

  private menu() {
    return html`<svg class="menu" width="4" height="14" viewBox="0 0 4 14"><path d="M0 0h3.6v3.6H0zM0 5.2h3.6v3.6H0zM0 10.4h3.6v3.6H0z" fill="#4c4c4c"/></svg>`;
  }

  render() {
    return html`<div class="page">
      <div class="nav">
        <div class="brand">
          <svg width="39" height="40" viewBox="0 0 39 40">
            <defs><linearGradient id="g" x1="0" y1="0" x2="0" y2="1"><stop offset="0" stop-color="#f05a28"/><stop offset="1" stop-color="#fbca0a"/></linearGradient></defs>
            <ellipse cx="19.5" cy="20" rx="19.5" ry="20" fill="#000"/>
            <path fill="url(#g)" d="M18 5l4 3.5 6 .5 1.5 5 4 5-2 5.500 1 5.500-5.500 1-3 4.500-5.500-1.500-5 2.500-2-5.500-5-3 1.500-5L6 18l4-4.500.500-5 5.500-.5z"/>
            <path fill="none" stroke="#000" stroke-width="2.600" stroke-linecap="round" d="M30 18c-2-6-8-8-13-5.500-6 3-7 10-3 14 3 3 9 3 11-1 1.500-3 .5-7-3-7.500-3-.4-4.500 2-4 4"/>
          </svg><i class="caret"></i>
        </div>
        <div class="dash">
          <svg width="20" height="20" viewBox="0 0 20 20">${[0, 7, 14].map((x) => [0, 7, 14].map((y) => svg`<rect x=${x} y=${y} width="6" height="6" rx="1" fill="#c8c8c8"/>`))}</svg>
          Instances<i class="caret"></i>
        </div>
        <div class="tools">
          <svg viewBox="0 0 18 18"><path d="M9 1.500l2.200 5 5.300.6-4 3.600 1.200 5.300L9 13.300 4.300 16l1.200-5.300-4-3.600 5.300-.6z" fill="none" stroke="#f2a125" stroke-width="1.500"/></svg>
          <svg viewBox="0 0 18 18"><path d="M9 4H5Q3 4 3 6v7q0 2 2 2h7q2 0 2-2v-2" fill="none" stroke="#d8d9da" stroke-width="1.800"/><path d="M11 1l6 4.300-6 4.300V7q-4 0-4.500 4Q5 4 11 3.600z" fill="#d8d9da"/></svg>
          <svg viewBox="0 0 18 18"><path d="M2.500 2.500h10l3 3v10h-13zM6 2.500v4.500h6V2.500M5.500 15.500v-5h7v5" fill="none" stroke="#d8d9da" stroke-width="1.700"/></svg>
          <svg viewBox="0 0 18 18"><circle cx="9" cy="9" r="4.200" fill="none" stroke="#d8d9da" stroke-width="3.400"/><circle cx="9" cy="9" r="6.800" fill="none" stroke="#d8d9da" stroke-width="2.200" stroke-dasharray="2.700 2.640"/></svg>
        </div>
        <div class="right">
          <svg width="9" height="14" viewBox="0 0 9 14"><path d="M7.500 1L2 7l5.500 6" fill="none" stroke="#d8d9da" stroke-width="2.200"/></svg>
          <span class="zoomout">Zoom Out</span>
          <svg width="9" height="14" viewBox="0 0 9 14"><path d="M1.500 1L7 7l-5.500 6" fill="none" stroke="#d8d9da" stroke-width="2.200"/></svg>
          <svg class="clock" style="margin-left:20px" width="15" height="15" viewBox="0 0 15 15"><circle cx="7.500" cy="7.500" r="6.300" fill="none" stroke="#d8d9da" stroke-width="1.800"/><path d="M8 3.500V8H4.500" fill="none" stroke="#d8d9da" stroke-width="1.500"/></svg>
          <span>Last 1 hour</span><span class="refresh">Refresh every 1m</span>
          <svg width="16" height="16" viewBox="0 0 16 16"><path d="M2 7a6 6 0 0 1 10.500-3M14 9a6 6 0 0 1-10.500 3" fill="none" stroke="#d8d9da" stroke-width="2.200"/><path d="M14.500 1v5.500H9zM1.500 15V9.500H7z" fill="#d8d9da"/></svg>
        </div>
      </div>
      <div class="vars"><span class="key">Host:</span><span class="pick">All<i class="caret"></i></span></div>
      <div class="grid six" style="height:162px">${this.menu()}${GAUGES.map((g) => html`<gauge-panel .gauge=${g}></gauge-panel>`)}</div>
      <div class="grid six" style="height:106px">${this.menu()}${STATS.map(([l, v]) => html`<stat-panel label=${l} value=${v}></stat-panel>`)}</div>
      ${ROWS.map((r) => html`<div class="grid two" style="height:${r.h}px">${r.menu ? this.menu() : nothing}${r.charts.map((c) => html`<graph-panel .chart=${c}></graph-panel>`)}</div>`)}
      <div class="bars">${COLLAPSED.map((t) => html`<div class="fold"><svg width="6" height="10" viewBox="0 0 6 10"><path d="M1 1l3.500 4L1 9" fill="none" stroke="#9a9a9a" stroke-width="1.800"/></svg>${t}</div>`)}</div>
      <div class="add"><svg width="10" height="10" viewBox="0 0 10 10"><path d="M5 0v10M0 5h10" stroke="#e3e3e3" stroke-width="2.600"/></svg>ADD ROW</div>
    </div>`;
  }
}
